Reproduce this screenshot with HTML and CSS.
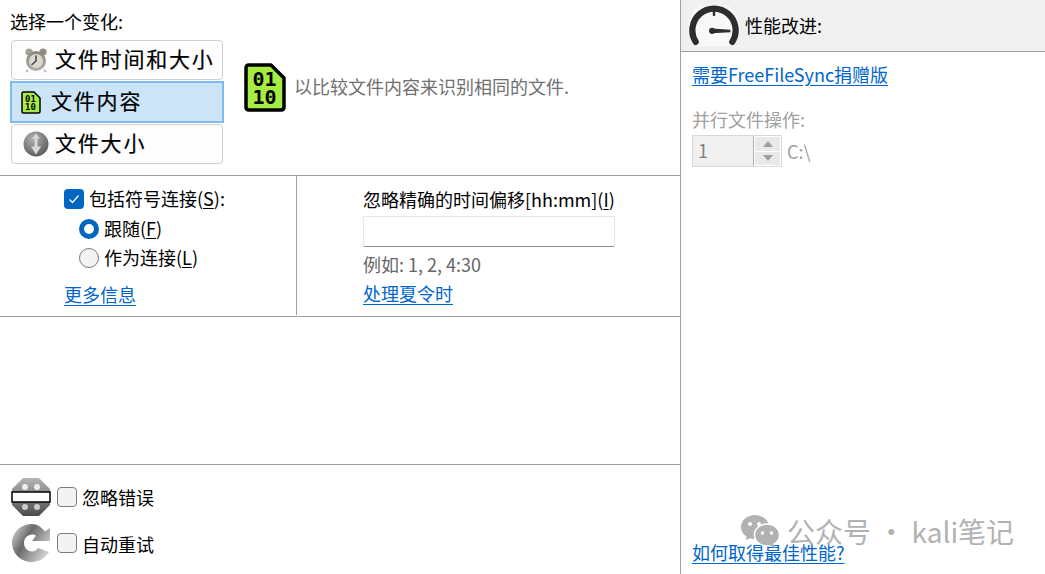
FILE: index.html
```html
<!DOCTYPE html>
<html lang="zh-CN">
  <head>
    <meta charset="utf-8">
    <title>比较设置</title>
    <link rel="stylesheet" href="styles.css">
  </head>
  <body>
    <div class="page">
      <div class="left">
        <section class="variant">
          <div class="variant-list">
            <div class="caption">选择一个变化:</div>
            <div class="var-btn">
              <svg class="var-icon" viewBox="0 0 26 26">
                <defs>
                  <linearGradient id="clockg" x1="0" y1="0" x2="0" y2="1"><stop offset="0" stop-color="#8a867c"/><stop offset="1" stop-color="#b0aea8"/></linearGradient>
                </defs>
                <circle cx="6" cy="5" r="3.600" fill="#a5a39c"/><circle cx="20" cy="5" r="3.600" fill="#8f8d86"/>
                <path d="M5 23l-2 2M21 23l2 2" stroke="#bbb" stroke-width="2"/>
                <circle cx="13" cy="14" r="10" fill="url(#clockg)"/><circle cx="13" cy="14" r="7" fill="#dcd8cc"/>
                <path d="M13 8.500V14L8.500 18" fill="none" stroke="#444" stroke-width="1.500"/>
              </svg>
              <span class="var-name">文件时间和大小</span>
            </div>
            <div class="var-btn var-btn-on">
              <svg class="var-icon-small" viewBox="0 0 20 23">
                <path d="M1 2.500Q1 1 2.500 1H13L19 7V20.500Q19 22 17.500 22H2.500Q1 22 1 20.500Z" fill="#a6ec42" stroke="#000" stroke-width="1.500"/>
                <text class="bits" x="9.500" y="10.500" font-size="9">01</text>
                <text class="bits" x="9.500" y="19" font-size="9">10</text>
              </svg>
              <span class="var-name">文件内容</span>
            </div>
            <div class="var-btn">
              <svg class="var-icon" viewBox="0 0 26 26">
                <defs>
                  <radialGradient id="ball" cx="0.4" cy="0.3" r="0.8"><stop offset="0" stop-color="#b4b4b4"/><stop offset="1" stop-color="#505050"/></radialGradient>
                </defs>
                <circle cx="13" cy="13" r="12.500" fill="url(#ball)"/>
                <path d="M13 2.500l4 5h-2.500v8H18l-5 8-5-8h3.500v-8H9z" fill="#d8d8d8"/>
              </svg>
              <span class="var-name">文件大小</span>
            </div>
          </div>
          <svg class="big-icon" viewBox="0 0 42 49">
            <path d="M2 5Q2 2 5 2H27L40 15V44Q40 47 37 47H5Q2 47 2 44Z" fill="#a6ec42" stroke="#000" stroke-width="3.500" stroke-linejoin="round"/>
            <text class="bits" x="20.500" y="23" font-size="20">01</text>
            <text class="bits" x="20.500" y="41" font-size="20">10</text>
          </svg>
          <div class="variant-desc">以比较文件内容来识别相同的文件.</div>
        </section>

        <section class="options">
          <div class="opt-links">
            <div class="check-row">
              <span class="box box-on">
                <svg viewBox="0 0 20 20"><path d="M5.500 10.500l3 3 6-7" fill="none" stroke="#fff" stroke-width="1.200"/></svg>
              </span>
              <span class="row-text">包括符号连接(<u>S</u>):</span>
            </div>
            <div class="radio-row"><span class="radio radio-on"></span><span class="row-text">跟随(<u>F</u>)</span></div>
            <div class="radio-row"><span class="radio"></span><span class="row-text">作为连接(<u>L</u>)</span></div>
            <a class="link more-link" href="#">更多信息</a>
          </div>
          <div class="opt-time">
            <div>忽略精确的时间偏移[hh:mm](<u>I</u>)</div>
            <div class="time-input"></div>
            <div class="hint">例如: 1, 2, 4:30</div>
            <a class="link dst-link" href="#">处理夏令时</a>
          </div>
        </section>

        <div class="blank"></div>

        <section class="errors">
          <div class="err-row">
            <svg class="err-icon" viewBox="0 0 40 40">
              <defs>
                <linearGradient id="stopg" x1="0" y1="0" x2="0" y2="1"><stop offset="0" stop-color="#b5b5b5"/><stop offset="1" stop-color="#4c4c4c"/></linearGradient>
              </defs>
              <path d="M12 1H28L39 12V28L28 39H12L1 28V12Z" fill="url(#stopg)"/>
              <circle cx="14" cy="10" r="3" fill="#eee"/><circle cx="26" cy="10" r="3" fill="#eee"/>
              <circle cx="14" cy="30" r="3" fill="#ccc"/><circle cx="26" cy="30" r="3" fill="#ccc"/>
              <rect x="1" y="15" width="38" height="10" fill="#fff" stroke="#000" stroke-width="1.500"/>
            </svg>
            <span class="box"></span>
            <span class="row-text">忽略错误</span>
          </div>
          <div class="err-row">
            <svg class="err-icon" viewBox="0 0 40 40">
              <defs>
                <linearGradient id="retryg" x1="0" y1="0" x2="1" y2="0.6"><stop offset="0" stop-color="#e2e2e2"/><stop offset="0.45" stop-color="#6a6a6a"/><stop offset="1" stop-color="#cfcfcf"/></linearGradient>
              </defs>
              <path d="M21 1C10 1 1 9.500 1 20s9 19 20 19c7 0 13-3.500 17-10l-11-4c-1.500 2.500-3.500 3.500-6 3.500-4.500 0-8-3.800-8-8.500s3.500-8.500 8-8.500c1.500 0 3 .5 4 1.200L21 18h18V5l-5 3.500C30.500 4 26 1 21 1z" fill="url(#retryg)"/>
            </svg>
            <span class="box"></span>
            <span class="row-text">自动重试</span>
          </div>
        </section>
      </div>

      <div class="right">
        <header class="perf-head">
          <svg class="gauge" viewBox="0 0 54 42">
            <circle cx="27" cy="23" r="27" fill="#f8f8f8"/>
            <path d="M8 38A22.500 22.500 0 1 1 46 38" fill="none" stroke="#2d2d2d" stroke-width="6.500" stroke-linecap="round"/>
            <path d="M27 4v7" stroke="#2d2d2d" stroke-width="2.500"/>
            <path d="M25 24l19 1.500v2.500l-19 1z" fill="#2d2d2d"/>
            <circle cx="25" cy="26.500" r="3.200" fill="#2d2d2d"/>
          </svg>
          <span class="row-text">性能改进:</span>
        </header>
        <div class="perf-body">
          <a class="link" href="#">需要FreeFileSync捐赠版</a>
          <div class="par-label">并行文件操作:</div>
          <div class="par-row">
            <div class="spin">
              <span class="spin-val">1</span>
              <span class="spin-btns">
                <span class="spin-btn"><i class="arrow-up"></i></span>
                <span class="spin-btn"><i class="arrow-down"></i></span>
              </span>
            </div>
            <span class="par-path">C:\</span>
          </div>
          <a class="link best-link" href="#">如何取得最佳性能?</a>
        </div>
      </div>
    </div>

    <div class="watermark">
      <svg class="wm-icon" viewBox="0 0 38 33">
        <ellipse cx="14" cy="12" rx="14" ry="12" fill="#b2b2b2"/>
        <path d="M6 19l-1 6 7-3z" fill="#b2b2b2"/>
        <ellipse cx="26" cy="20" rx="12.500" ry="11" fill="#b2b2b2" stroke="#fff" stroke-width="1.500"/>
        <path d="M32 28l2 5-6-3z" fill="#b2b2b2"/>
        <circle cx="9" cy="9" r="2" fill="#fff"/><circle cx="18" cy="9" r="2" fill="#fff"/>
        <circle cx="21.500" cy="18" r="1.700" fill="#fff"/><circle cx="30.500" cy="18" r="1.700" fill="#fff"/>
      </svg>
      <span>公众号 · kali笔记</span>
    </div>
  </body>
</html>
```

FILE: styles.css
```css
html, body {
  margin: 0;
  height: 100%;
  overflow: hidden;
  background: #fff;
}

body {
  position: relative;
  font-family: "Noto Sans CJK SC", "Noto Sans", sans-serif;
  font-size: 18px;
  line-height: 26px;
  color: #000;
}

u {
  text-underline-offset: 2px;
}

.page {
  display: flex;
  height: 574px;
}

.link {
  color: #0066cc;
  text-decoration: underline;
  text-underline-offset: 3px;
}

.row-text {
  padding-bottom: 2px;
}

/* left column */
.left {
  width: 680px;
  flex: none;
  display: flex;
  flex-direction: column;
  border-right: 1px solid #a0a0a0;
}

.variant {
  height: 176px;
  flex: none;
  display: flex;
  align-items: center;
  padding-left: 10px;
  box-sizing: border-box;
  border-bottom: 1px solid #a0a0a0;
}

.variant-list {
  width: 214px;
  padding-top: 8px;
  flex: none;
  align-self: flex-start;
}

.caption {
  height: 32px;
}

.var-btn {
  display: flex;
  align-items: center;
  height: 40px;
  margin: 0 1px;
  padding-left: 11px;
  gap: 6px;
  border: 1px solid #d0d0d0;
  border-radius: 4px;
  background: #fdfdfd;
  box-sizing: border-box;
}

.var-btn-on {
  height: 42px;
  margin: 1px 0;
  padding-left: 9px;
  gap: 10px;
  border: 2px solid #7ebcee;
  border-radius: 0;
  background: #cce4f7;
}

.var-icon {
  width: 26px;
  height: 26px;
  flex: none;
}

.var-icon-small {
  width: 20px;
  height: 23px;
  flex: none;
}

.var-name {
  font-size: 21px;
  letter-spacing: 1.800px;
  white-space: nowrap;
  padding-bottom: 4px;
  -webkit-text-stroke: 0.2px #000;
}

.bits {
  font-family: "DejaVu Sans Mono", monospace;
  font-weight: bold;
  text-anchor: middle;
  fill: #000;
}

.big-icon {
  width: 42px;
  height: 49px;
  flex: none;
  margin-left: 20px;
  margin-top: -1px;
}

.variant-desc {
  margin-left: 8px;
  padding-bottom: 4px;
  color: #707070;
}

.options {
  height: 141px;
  flex: none;
  display: flex;
  box-sizing: border-box;
  border-bottom: 1px solid #a0a0a0;
}

.opt-links {
  width: 297px;
  flex: none;
  box-sizing: border-box;
  padding: 10px 0 0 64px;
  border-right: 1px solid #a0a0a0;
  height: 139px;
}

.check-row,
.radio-row,
.err-row {
  display: flex;
  align-items: center;
  gap: 5px;
}

.check-row {
  height: 26px;
}

.radio-row {
  height: 29px;
  padding-left: 15px;
}

.check-row + .radio-row {
  margin-top: 2px;
}

.more-link {
  display: block;
  margin-top: 9px;
  width: fit-content;
}

.box {
  width: 20px;
  height: 20px;
  flex: none;
  box-sizing: border-box;
  border: 1px solid #7a7a7a;
  border-radius: 4px;
  background: #f3f3f3;
}

.box-on {
  border: 0;
  background: #0067c0;
}

.box-on svg {
  display: block;
}

.radio {
  width: 20px;
  height: 20px;
  flex: none;
  box-sizing: border-box;
  border: 1px solid #7a7a7a;
  border-radius: 50%;
  background: #f3f3f3;
}

.radio-on {
  border: 5.500px solid #0067c0;
  background: #fff;
}

.opt-time {
  padding: 10px 0 0 66px;
}

.time-input {
  width: 252px;
  height: 31px;
  margin-top: 4px;
  box-sizing: border-box;
  border: 1px solid #e6e6e6;
  border-bottom-color: #8a8a8a;
  border-radius: 2px;
}

.hint {
  margin-top: 4px;
  color: #666;
}

.dst-link {
  display: block;
  margin-top: 3px;
  width: fit-content;
}

.blank {
  flex: 1;
}

.errors {
  height: 110px;
  flex: none;
  box-sizing: border-box;
  padding: 12px 0 0 11px;
  border-top: 1px solid #a0a0a0;
}

.err-row {
  height: 40px;
}

.err-row + .err-row {
  margin-top: 6px;
}

.err-row .row-text {
  padding-bottom: 0;
}

.err-row + .err-row .row-text {
  padding-top: 2px;
}

.err-icon {
  width: 40px;
  height: 40px;
  flex: none;
  margin-right: 1px;
}

/* right column */
.right {
  flex: 1;
  display: flex;
  flex-direction: column;
}

.perf-head {
  height: 52px;
  flex: none;
  display: flex;
  align-items: center;
  box-sizing: border-box;
  padding-left: 7px;
  gap: 5px;
  background: #f0f0f0;
  border-bottom: 1px solid #a0a0a0;
}

.gauge {
  width: 52px;
  height: 41px;
  flex: none;
}

.perf-body {
  flex: 1;
  display: flex;
  flex-direction: column;
  align-items: flex-start;
  padding: 9px 0 9px 11px;
}

.par-label {
  margin-top: 19px;
  color: #a0a0a0;
}

.par-row {
  display: flex;
  align-items: center;
  gap: 5px;
  margin-top: 3px;
  color: #a0a0a0;
}

.spin {
  display: flex;
  width: 90px;
  height: 32px;
  box-sizing: border-box;
  border: 1px solid #d8d8d8;
  background: #f0f0f0;
}

.spin-val {
  flex: 1;
  padding-left: 5px;
  color: #808080;
  line-height: 28px;
}

.spin-btns {
  width: 25px;
  display: flex;
  flex-direction: column;
  gap: 1px;
  border-left: 1px solid #b0b0b0;
  background: #fff;
  padding: 1px;
}

.spin-btn {
  flex: 1;
  display: flex;
  align-items: center;
  justify-content: center;
  background: #e9e9e9;
}

.arrow-up,
.arrow-down {
  width: 0;
  height: 0;
  border-left: 5px solid transparent;
  border-right: 5px solid transparent;
}

.arrow-up {
  border-bottom: 6px solid #a0a0a0;
}

.arrow-down {
  border-top: 6px solid #a0a0a0;
}

.best-link {
  margin-top: auto;
}

/* watermark over the corner */
.watermark {
  position: absolute;
  left: 741px;
  top: 513px;
  display: flex;
  align-items: center;
  gap: 8px;
  font-size: 28px;
  line-height: 36px;
  color: #b2b2b2;
  white-space: nowrap;
}

.wm-icon {
  width: 38px;
  height: 33px;
  flex: none;
}
```
